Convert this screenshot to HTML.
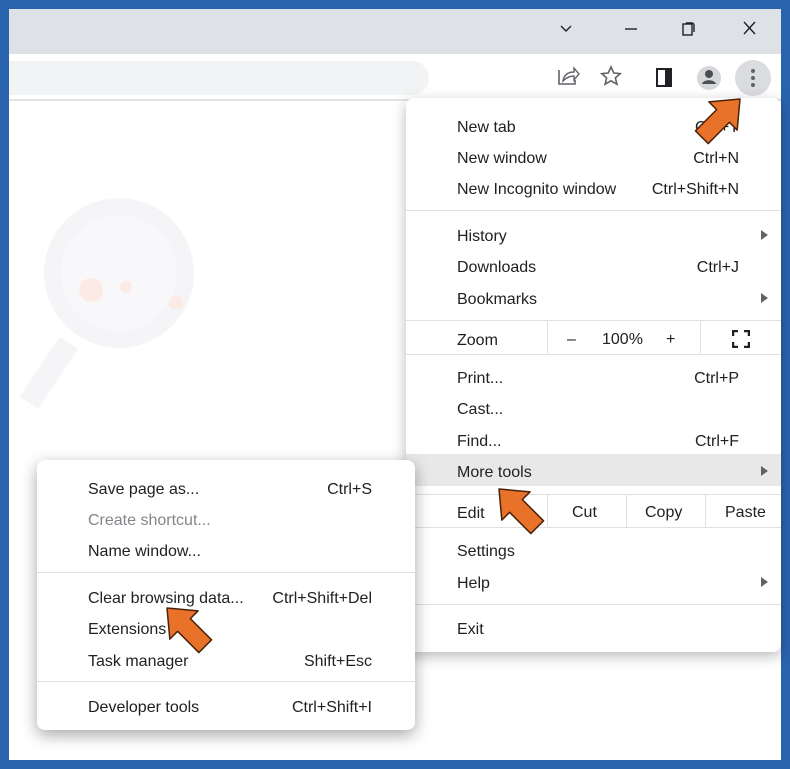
<!DOCTYPE html>
<html><head><meta charset="utf-8"><style>
*{margin:0;padding:0;box-sizing:border-box}
body{width:790px;height:769px;background:#2a63ad;position:relative;overflow:hidden;font-family:"Liberation Sans",sans-serif;font-size:16px;color:#202124}
.win{position:absolute;left:9px;top:9px;width:772px;height:751px;background:#fff;overflow:hidden}
.title{position:absolute;left:0;top:0;width:772px;height:45px;background:#dee1e6}
.tool{position:absolute;left:0;top:45px;width:772px;height:47px;background:#fff;border-bottom:2px solid #e3e3e3}
.omni{position:absolute;left:-20px;top:7px;width:440px;height:34px;background:#f1f3f4;border-radius:17px}
.menu{position:absolute;background:#fff;border-radius:8px;box-shadow:0 4px 14px rgba(0,0,0,.28)}
.t{position:absolute;white-space:nowrap;line-height:20px;margin-top:2px}
.r{position:absolute;white-space:nowrap;line-height:20px;text-align:right;margin-top:2px}
.sep{position:absolute;height:1px;background:#e0e0e0}
.tri{position:absolute;width:0;height:0;border-top:5px solid transparent;border-bottom:5px solid transparent;border-left:7px solid #5f6368}
</style></head><body>
<div class="win">
<div class="title">
<svg style="position:absolute;left:0;top:0" width="772" height="45">
<path d="M552 17 L557 22 L562 17" stroke="#202124" stroke-width="1.4" fill="none"/>
<path d="M616 20 H628" stroke="#202124" stroke-width="1.4"/>
<rect x="674" y="15" width="9" height="11" fill="none" stroke="#202124" stroke-width="1.4"/>
<path d="M677 14 h6 a2 2 0 0 1 2 2 v7" stroke="#202124" stroke-width="1.4" fill="none"/>
<path d="M735 13 L746 25 M746 13 L735 25" stroke="#202124" stroke-width="1.4"/>
</svg></div>
<div class="tool"><div class="omni"></div>
<svg style="position:absolute;left:0;top:0" width="772" height="47">
<path d="M550 16 v14 h16 v-4" stroke="#5f6368" stroke-width="1.6" fill="none"/>
<path d="M554 27 c1-6 5-9 11-9 v-4 l5 6 -5 6 v-4 c-5 0 -8 2 -11 5z" stroke="#5f6368" stroke-width="1.4" fill="none"/>
<path d="M602 13 l2.8 6 6.4 .6 -4.8 4.3 1.5 6.3 -5.9-3.4 -5.9 3.4 1.5-6.3 -4.8-4.3 6.4-.6z" stroke="#5f6368" stroke-width="1.6" fill="none"/>
<rect x="648" y="15" width="14" height="17" fill="none" stroke="#202124" stroke-width="2"/>
<rect x="656" y="15" width="6" height="17" fill="#202124"/>
<circle cx="700" cy="24" r="12" fill="#d5d7db"/>
<circle cx="700" cy="20" r="4" fill="#4a4d52"/>
<path d="M693 30 c1-5 13-5 14 0z" fill="#4a4d52"/>
<circle cx="744" cy="24" r="18" fill="#dadce0"/>
<circle cx="744" cy="17" r="2" fill="#5f6368"/><circle cx="744" cy="24" r="2" fill="#5f6368"/><circle cx="744" cy="31" r="2" fill="#5f6368"/>
</svg></div>
<svg style="position:absolute;left:0;top:94px" width="772" height="660">
<circle cx="110" cy="170" r="75" fill="#f5f5f7"/>
<circle cx="110" cy="170" r="58" fill="#f8f8fa"/>
<circle cx="82" cy="187" r="12" fill="#fcebe5"/><circle cx="117" cy="184" r="6" fill="#fcebe5"/><circle cx="167" cy="200" r="7" fill="#fcebe5"/>
<path d="M60 240 L20 300" stroke="#f5f5f7" stroke-width="22"/>
</svg>
</div>

<div class="menu" style="left:406px;top:98px;width:375px;height:554px">
<div class="t" style="left:51px;top:18px">New tab</div><div class="r" style="right:42px;top:18px">Ctrl+T</div>
<div class="t" style="left:51px;top:49px">New window</div><div class="r" style="right:42px;top:49px">Ctrl+N</div>
<div class="t" style="left:51px;top:80px">New Incognito window</div><div class="r" style="right:42px;top:80px">Ctrl+Shift+N</div>
<div class="sep" style="left:0;right:0;top:112px"></div>
<div class="t" style="left:51px;top:127px">History</div><div class="tri" style="right:13px;top:132px"></div>
<div class="t" style="left:51px;top:158px">Downloads</div><div class="r" style="right:42px;top:158px">Ctrl+J</div>
<div class="t" style="left:51px;top:190px">Bookmarks</div><div class="tri" style="right:13px;top:195px"></div>
<div class="sep" style="left:0;right:0;top:222px"></div>
<div class="t" style="left:51px;top:231px">Zoom</div>
<div style="position:absolute;left:141px;top:222px;width:1px;height:34px;background:#e0e0e0"></div>
<div class="t" style="left:161px;top:230px">–</div>
<div class="t" style="left:196px;top:230px">100%</div>
<div class="t" style="left:260px;top:230px">+</div>
<div style="position:absolute;left:294px;top:222px;width:1px;height:34px;background:#e0e0e0"></div>
<svg style="position:absolute;left:326px;top:232px" width="18" height="18"><path d="M1 6V1h5M12 1h5v5M17 12v5h-5M6 17H1v-5" stroke="#202124" stroke-width="2.5" fill="none"/></svg>
<div class="sep" style="left:0;right:0;top:256px"></div>
<div class="t" style="left:51px;top:269px">Print...</div><div class="r" style="right:42px;top:269px">Ctrl+P</div>
<div class="t" style="left:51px;top:300px">Cast...</div>
<div class="t" style="left:51px;top:332px">Find...</div><div class="r" style="right:42px;top:332px">Ctrl+F</div>
<div style="position:absolute;left:0;right:0;top:356px;height:32px;background:#e8e8e9"></div>
<div class="t" style="left:51px;top:363px">More tools</div><div class="tri" style="right:13px;top:368px"></div>
<div class="sep" style="left:0;right:0;top:396px"></div>
<div class="t" style="left:51px;top:404px">Edit</div>
<div style="position:absolute;left:141px;top:396px;width:1px;height:33px;background:#e0e0e0"></div>
<div class="t" style="left:166px;top:403px">Cut</div>
<div style="position:absolute;left:220px;top:396px;width:1px;height:33px;background:#e0e0e0"></div>
<div class="t" style="left:239px;top:403px">Copy</div>
<div style="position:absolute;left:299px;top:396px;width:1px;height:33px;background:#e0e0e0"></div>
<div class="t" style="left:319px;top:403px">Paste</div>
<div class="sep" style="left:0;right:0;top:429px"></div>
<div class="t" style="left:51px;top:442px">Settings</div>
<div class="t" style="left:51px;top:474px">Help</div><div class="tri" style="right:13px;top:479px"></div>
<div class="sep" style="left:0;right:0;top:506px"></div>
<div class="t" style="left:51px;top:520px">Exit</div>
</div>

<div class="menu" style="left:37px;top:460px;width:378px;height:270px;box-shadow:0 5px 16px rgba(0,0,0,.35)">
<div class="t" style="left:51px;top:18px">Save page as...</div><div class="r" style="right:43px;top:18px">Ctrl+S</div>
<div class="t" style="left:51px;top:49px;color:#80868b">Create shortcut...</div>
<div class="t" style="left:51px;top:80px">Name window...</div>
<div class="sep" style="left:0;right:0;top:112px"></div>
<div class="t" style="left:51px;top:127px">Clear browsing data...</div><div class="r" style="right:43px;top:127px">Ctrl+Shift+Del</div>
<div class="t" style="left:51px;top:158px">Extensions</div>
<div class="t" style="left:51px;top:190px">Task manager</div><div class="r" style="right:43px;top:190px">Shift+Esc</div>
<div class="sep" style="left:0;right:0;top:221px"></div>
<div class="t" style="left:51px;top:236px">Developer tools</div><div class="r" style="right:43px;top:236px">Ctrl+Shift+I</div>
</div>

<svg style="position:absolute;left:0;top:0" width="790" height="769">
<defs><polygon id="ar" points="0,0 24,-20 24,-9 54,-9 54,9 24,9 24,20" fill="#e8722a" stroke="#4a2208" stroke-width="1.5" stroke-linejoin="round"/></defs>
<use href="#ar" transform="translate(740,99) rotate(135)"/>
<use href="#ar" transform="translate(499,489) rotate(45)"/>
<use href="#ar" transform="translate(167,608) rotate(45)"/>
</svg>
</body></html>
